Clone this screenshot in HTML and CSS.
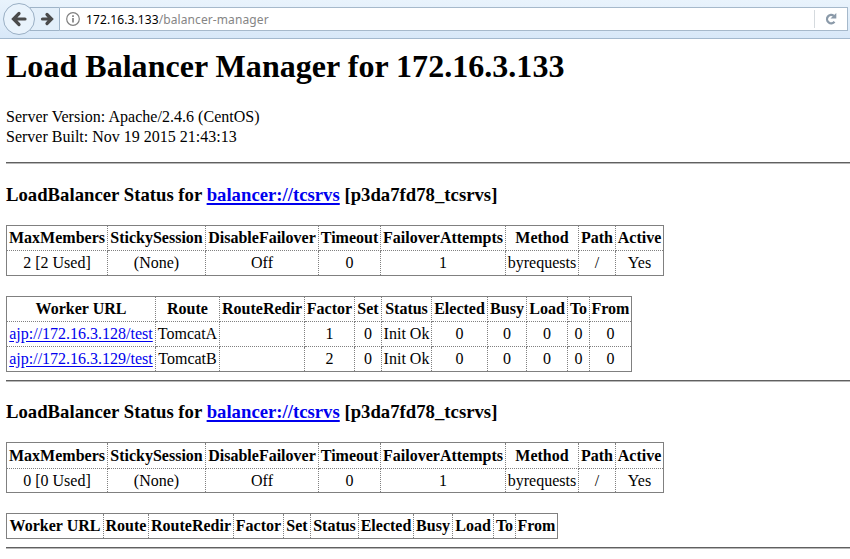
FILE: index.html
```html
<!DOCTYPE html>
<html lang="en">
<head>
<meta charset="utf-8">
<title>Balancer Manager</title>
<link rel="stylesheet" href="styles.css">
</head>
<body>
<header class="toolbar">
  <svg class="nav" width="60" height="38" viewBox="0 0 60 38">
    <path d="M30 7.5H59.5V30.500H30" fill="#e3effa" stroke="#9fb4c8"/>
    <circle cx="19" cy="19" r="15.500" fill="#e9f3fc" stroke="#9aafc4"/>
    <path d="M25 19H14M19 13.500L13.500 19L19 24.500" fill="none" stroke="#4b4b4b" stroke-width="3.200" stroke-linecap="round"/>
    <path d="M42.500 19H50M47 14.500L51.500 19L47 23.500" fill="none" stroke="#4b4b4b" stroke-width="3.200" stroke-linecap="round"/>
  </svg>
  <div class="address">
    <svg class="info" width="14" height="14" viewBox="0 0 14 14">
      <circle cx="7" cy="7" r="6.300" fill="none" stroke="#808080" stroke-width="1.200"/>
      <path d="M7 6V10.500M7 3.300V5" stroke="#808080" stroke-width="1.700"/>
    </svg>
    <span class="url"><b>172.16.3.133</b>/balancer-manager</span>
    <span class="reload">
      <svg width="12" height="12" viewBox="0 0 12 12">
        <path d="M8.800 2.800A4.200 4.200 0 1 0 9.500 8.800" fill="none" stroke="#8b9aa9" stroke-width="2.300"/>
        <path d="M11.300 0V5.500H5.500Z" fill="#8b9aa9"/>
      </svg>
    </span>
  </div>
</header>
<main>
  <h1>Load Balancer Manager for 172.16.3.133</h1>
  <dl><dt class="version">Server Version: Apache/2.4.6 (CentOS)</dt><dt>Server Built: Nov 19 2015 21:43:13</dt></dl>
  <hr>
  <h3>LoadBalancer Status for <a href="#">balancer://tcsrvs</a> [p3da7fd78_tcsrvs]</h3>
  <table class="summary">
    <tr><th>MaxMembers</th><th>StickySession</th><th>DisableFailover</th><th>Timeout</th><th>FailoverAttempts</th><th>Method</th><th>Path</th><th>Active</th></tr>
    <tr><td>2 [2 Used]</td><td>(None)</td><td>Off</td><td>0</td><td>1</td><td>byrequests</td><td>/</td><td>Yes</td></tr>
  </table>
  <table class="workers">
    <tr><th>Worker URL</th><th>Route</th><th>RouteRedir</th><th>Factor</th><th>Set</th><th>Status</th><th>Elected</th><th>Busy</th><th>Load</th><th>To</th><th>From</th></tr>
    <tr><td><a href="#">ajp://172.16.3.128/test</a></td><td>TomcatA</td><td></td><td>1</td><td>0</td><td>Init Ok</td><td>0</td><td>0</td><td>0</td><td>0</td><td>0</td></tr>
    <tr><td><a href="#">ajp://172.16.3.129/test</a></td><td>TomcatB</td><td></td><td>2</td><td>0</td><td>Init Ok</td><td>0</td><td>0</td><td>0</td><td>0</td><td>0</td></tr>
  </table>
  <hr class="end">
  <h3>LoadBalancer Status for <a href="#">balancer://tcsrvs</a> [p3da7fd78_tcsrvs]</h3>
  <table class="summary unused">
    <tr><th>MaxMembers</th><th>StickySession</th><th>DisableFailover</th><th>Timeout</th><th>FailoverAttempts</th><th>Method</th><th>Path</th><th>Active</th></tr>
    <tr><td>0 [0 Used]</td><td>(None)</td><td>Off</td><td>0</td><td>1</td><td>byrequests</td><td>/</td><td>Yes</td></tr>
  </table>
  <table class="workers empty">
    <tr><th>Worker URL</th><th>Route</th><th>RouteRedir</th><th>Factor</th><th>Set</th><th>Status</th><th>Elected</th><th>Busy</th><th>Load</th><th>To</th><th>From</th></tr>
  </table>
  <hr class="end">
</main>
</body>
</html>
```
FILE: styles.css
```css
body {
  margin: 0;
  height: 559px;
  overflow: hidden;
  background: #fff;
  color: #000;
  font: 16px/20px "Liberation Serif", serif;
}
.toolbar {
  box-sizing: border-box;
  height: 39px;
  display: flex;
  align-items: flex-start;
  background: linear-gradient(#e9f3fc, #d8e8f8);
  border-bottom: 1px solid #a3b9ce;
}
.nav { flex: none; }
.address {
  box-sizing: border-box;
  width: 788px;
  height: 24px;
  margin-top: 7px;
  display: flex;
  align-items: center;
  background: #fff;
  border: 1px solid #a6b9cb;
  border-left: 0;
}
.info { margin-left: 6px; }
.url {
  margin-left: 6px;
  padding-top: 1px;
  font: 12px/20px "Noto Sans", sans-serif;
  letter-spacing: 0.1px;
  color: #858585;
  white-space: nowrap;
}
.url b { font-weight: 400; color: #000; }
.reload {
  margin-left: auto;
  width: 33px;
  height: 18px;
  display: flex;
  align-items: center;
  padding-left: 10px;
  box-sizing: border-box;
  border-left: 1px solid #d5dade;
}
main { padding-left: 6px; }
h1 { margin: 9px 0 0; font-size: 32px; line-height: 36px; letter-spacing: 0.03px; white-space: nowrap; }
dl { margin: 23px 0 0; }
.version { letter-spacing: 0.03px; }
hr {
  margin: 15px 0 0;
  height: 1px;
  border: 0;
  border-top: 1px solid #606060;
  background: #b8b8b8;
}
hr.end { margin-top: 8px; }
h3 { margin: 19px 0 18px; font-size: 18.72px; line-height: 24px; letter-spacing: 0.01px; white-space: nowrap; }
.end + h3 { margin: 18px 0 18px; }
a { color: #00e; text-decoration: underline; text-underline-offset: 2px; }
h3 a { text-decoration-thickness: 2px; }
table {
  table-layout: fixed;
  border-collapse: collapse;
  border: 1px solid #808080;
}
.summary { width: 658px; margin-bottom: 20px; }
.workers { width: 626px; }
.workers.empty { width: 552px; }
tr { height: 25px; }
th, td {
  padding: 0;
  height: 24px;
  line-height: 24px;
  border: 1px dotted #808080;
  text-align: center;
  white-space: nowrap;
}
.unused tr:first-child { height: 26px; }
.unused tr:last-child { height: 24px; }
.unused th { height: 25px; line-height: 25px; }
.unused td { height: 23px; line-height: 23px; }
.summary th:nth-child(1) { width: 100px; }
.summary th:nth-child(2) { width: 97px; }
.summary th:nth-child(3) { width: 112px; }
.summary th:nth-child(4) { width: 61px; }
.summary th:nth-child(5) { width: 124px; }
.summary th:nth-child(6) { width: 72px; }
.summary th:nth-child(7) { width: 36px; }
.workers th:nth-child(1) { width: 148px; }
.workers th:nth-child(2) { width: 63px; }
.workers th:nth-child(3) { width: 84px; }
.workers th:nth-child(4) { width: 49px; }
.workers th:nth-child(5) { width: 26px; }
.workers th:nth-child(6) { width: 49px; }
.workers th:nth-child(7) { width: 55px; }
.workers th:nth-child(8) { width: 38px; }
.workers th:nth-child(9) { width: 40px; }
.workers th:nth-child(10) { width: 21px; }
.empty th:nth-child(1) { width: 96px; }
.empty th:nth-child(2) { width: 44px; }
.empty th:nth-child(6) { width: 47px; }
.empty th:nth-child(7) { width: 54px; }
```
